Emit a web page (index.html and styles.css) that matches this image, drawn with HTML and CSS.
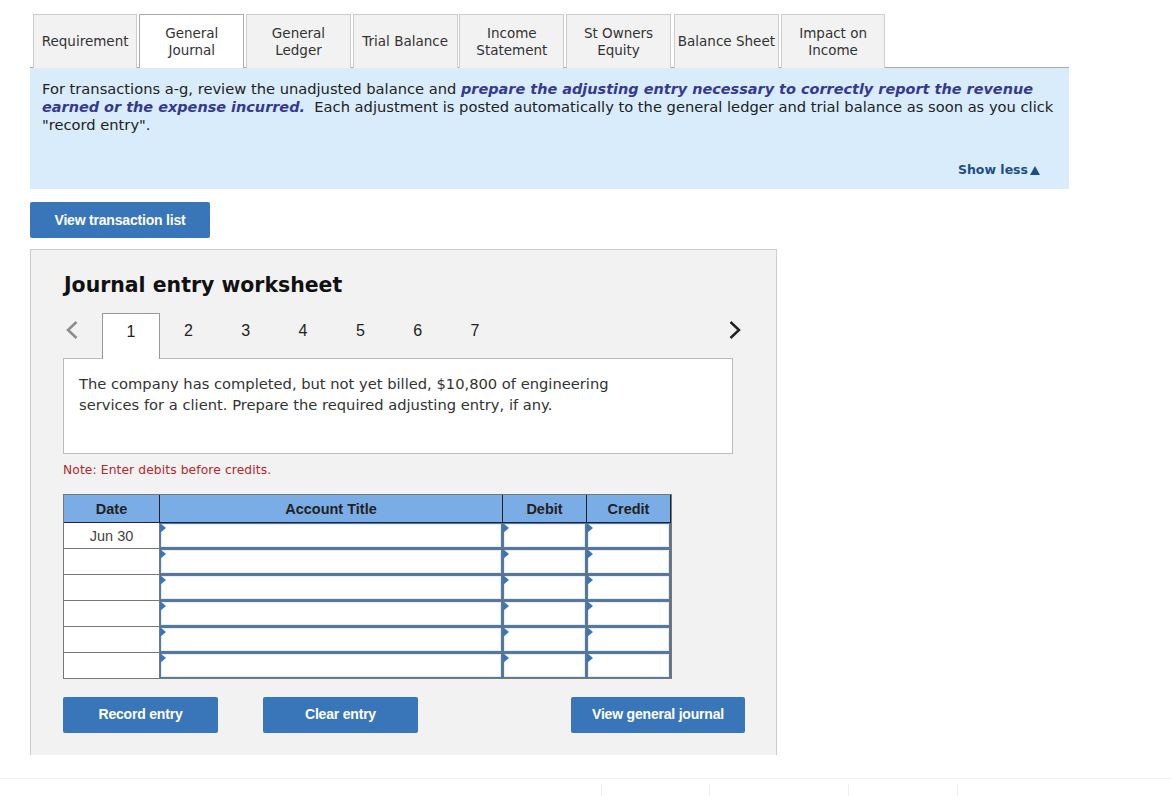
FILE: index.html
```html
<!DOCTYPE html>
<html lang="en">
<head>
<meta charset="utf-8">
<title>Journal entry worksheet</title>
<link rel="stylesheet" href="styles.css">
</head>
<body>
<main class="page">
  <nav class="tabs">
    <div class="tab">Requirement</div>
    <div class="tab active">General<br>Journal</div>
    <div class="tab">General<br>Ledger</div>
    <div class="tab">Trial Balance</div>
    <div class="tab">Income<br>Statement</div>
    <div class="tab">St Owners<br>Equity</div>
    <div class="tab">Balance Sheet</div>
    <div class="tab">Impact on<br>Income</div>
  </nav>
  <section class="info">
    <p>For transactions a-g, review the unadjusted balance and <b>prepare the adjusting entry necessary to correctly report the revenue earned or the expense incurred.</b>&nbsp; Each adjustment is posted automatically to the general ledger and trial balance as soon as you click "record entry".</p>
    <div class="less">Show less<span class="tri"></span></div>
  </section>
  <button class="btn list">View transaction list</button>
  <section class="panel">
    <h2>Journal entry worksheet</h2>
    <div class="steps">
      <svg class="chev" width="14" height="20" viewBox="0 0 14 20"><path d="M11.500 2 L3 10 L11.500 18" fill="none" stroke="#8c8c8c" stroke-width="2.500"/></svg>
      <div class="step on">1</div>
      <div class="step">2</div>
      <div class="step">3</div>
      <div class="step">4</div>
      <div class="step">5</div>
      <div class="step">6</div>
      <div class="step">7</div>
      <svg class="chev next" width="14" height="20" viewBox="0 0 14 20"><path d="M2.500 2 L11 10 L2.500 18" fill="none" stroke="#222" stroke-width="2.500"/></svg>
    </div>
    <div class="prompt">The company has completed, but not yet billed, $10,800 of engineering<br>services for a client. Prepare the required adjusting entry, if any.</div>
    <p class="note">Note: Enter debits before credits.</p>
    <div class="grid">
      <div class="h">Date</div><div class="h">Account Title</div><div class="h">Debit</div><div class="h">Credit</div>
      <div class="d">Jun 30</div><div class="i"></div><div class="i"></div><div class="i"></div>
      <div class="d"></div><div class="i"></div><div class="i"></div><div class="i"></div>
      <div class="d"></div><div class="i"></div><div class="i"></div><div class="i"></div>
      <div class="d"></div><div class="i"></div><div class="i"></div><div class="i"></div>
      <div class="d"></div><div class="i"></div><div class="i"></div><div class="i"></div>
      <div class="d"></div><div class="i"></div><div class="i"></div><div class="i"></div>
    </div>
    <div class="actions">
      <button class="btn rec">Record entry</button>
      <button class="btn clr">Clear entry</button>
      <button class="btn view">View general journal</button>
    </div>
  </section>
  <footer class="foot">
    <span class="tick t1"></span><span class="tick t2"></span><span class="tick t3"></span><span class="tick t4"></span>
  </footer>
</main>
</body>
</html>
```
FILE: styles.css
```css
* { box-sizing: border-box; }
html, body { margin: 0; background: #fff; }
body { height: 796px; overflow: hidden; font-family: "DejaVu Sans", Verdana, sans-serif; color: #222; }
.page { padding-top: 14px; }

.tabs { display: flex; margin-left: 30px; width: 1039px; height: 54px; padding-left: 2.700px; gap: 1.900px; border-bottom: 1px solid #aaa; }
.tab { width: 104.800px; flex: none; height: 54px; background: #f2f2f2; border: 1px solid #ccc; border-bottom: 0; display: flex; align-items: center; justify-content: center; text-align: center; font-size: 13.500px; line-height: 17px; white-space: nowrap; color: #333; }
.tab:nth-child(7) { margin-left: 1.200px; }
.tab.active { background: #fff; border-color: #aaa; position: relative; z-index: 1; }

.info { margin-left: 30px; width: 1039px; height: 121px; background: #d9ecfb; padding: 11.500px 12px 0; position: relative; }
.info p { margin: 0; font-size: 14.680px; line-height: 18px; color: #222; }
.info b { color: #37398f; font-style: italic; font-size: 14.450px; }
.less { position: absolute; right: 29px; top: 94px; font-size: 12.500px; font-weight: bold; color: #1f4e87; display: flex; align-items: center; gap: 2px; }
.tri { width: 0; height: 0; border-left: 5.500px solid transparent; border-right: 5.500px solid transparent; border-bottom: 9px solid #1f4e87; margin-top: 2px; }

.btn { display: block; border: 0; border-radius: 2px; background: #3976b9; color: #fff; font-family: "Liberation Sans", Arial, sans-serif; font-weight: bold; font-size: 14px; letter-spacing: -0.200px; height: 36px; padding: 0; flex: none; }
.list { width: 180px; margin: 13px 0 11px 30px; }

.panel { margin-left: 30px; width: 747px; height: 506px; background: #f2f2f2; border: 1px solid #ccc; border-bottom: 0; padding: 0 32px; }
h2 { margin: 23px 0 0; padding-left: 1px; font-size: 20.450px; line-height: 25px; font-weight: bold; color: #111; }
.steps { display: flex; align-items: stretch; height: 45px; margin-top: 15px; position: relative; }
.chev { position: absolute; left: 2px; top: 7px; }
.chev.next { left: auto; right: 2px; }
.step { width: 57.300px; display: flex; align-items: center; justify-content: center; padding-bottom: 9px; font: 16px "Liberation Sans", Arial, sans-serif; color: #222; }
.step.on { width: 57.800px; margin-left: 39px; background: #fff; border: 1px solid #999; border-bottom: 0; height: 46px; position: relative; z-index: 1; }
.prompt { width: 670px; height: 96px; background: #fff; border: 1px solid #bbb; padding: 14px 15px 0; font-size: 14.700px; line-height: 21px; color: #333; }
.note { margin: 8px 0 0; font-size: 12.300px; line-height: 16px; color: #b3282d; letter-spacing: 0.100px; }

.grid { display: grid; grid-template-columns: 96px 343px 84px 84px; grid-template-rows: 28px repeat(5, 26px) 25px; width: 609px; margin-top: 16px; border: 1px solid #777; font-family: "Liberation Sans", Arial, sans-serif; background: #6f6f6f; }
.h { background: #7aade6; border-right: 1px solid #222; border-bottom: 1px solid #222; display: flex; align-items: center; justify-content: center; font-weight: bold; font-size: 14.500px; color: #222; }
.d { background: #fff; border-bottom: 1px solid #777; border-right: 1px solid #777; display: flex; align-items: center; justify-content: center; font-size: 14.500px; color: #444; }
.d:nth-last-child(4) { border-bottom: 0; }
.i { background: #fff; border: 1px solid #4d7cb4; box-shadow: inset 0 0 0 1px #e4eefa; margin: 0 1px 1px 0; position: relative; }
.i:nth-last-child(-n+3) { margin-bottom: 0; }
.i::before { content: ""; position: absolute; left: -1px; top: -1px; width: 0; height: 0; border-left: 6px solid #3976b9; border-top: 5px solid transparent; border-bottom: 5px solid transparent; }

.actions { display: flex; margin-top: 18px; }
.actions .btn { padding-bottom: 2px; }
.rec { width: 155px; }
.clr { width: 155px; margin-left: 45px; }
.view { width: 174px; margin-left: 153px; }

.foot { margin-top: 23px; height: 18px; border-top: 1px solid #f0f0f0; position: relative; }
.tick { position: absolute; top: 5px; bottom: 0; width: 1px; background: #eee; }
.t1 { left: 601px; }
.t2 { left: 709px; }
.t3 { left: 848px; }
.t4 { left: 957px; }
```
